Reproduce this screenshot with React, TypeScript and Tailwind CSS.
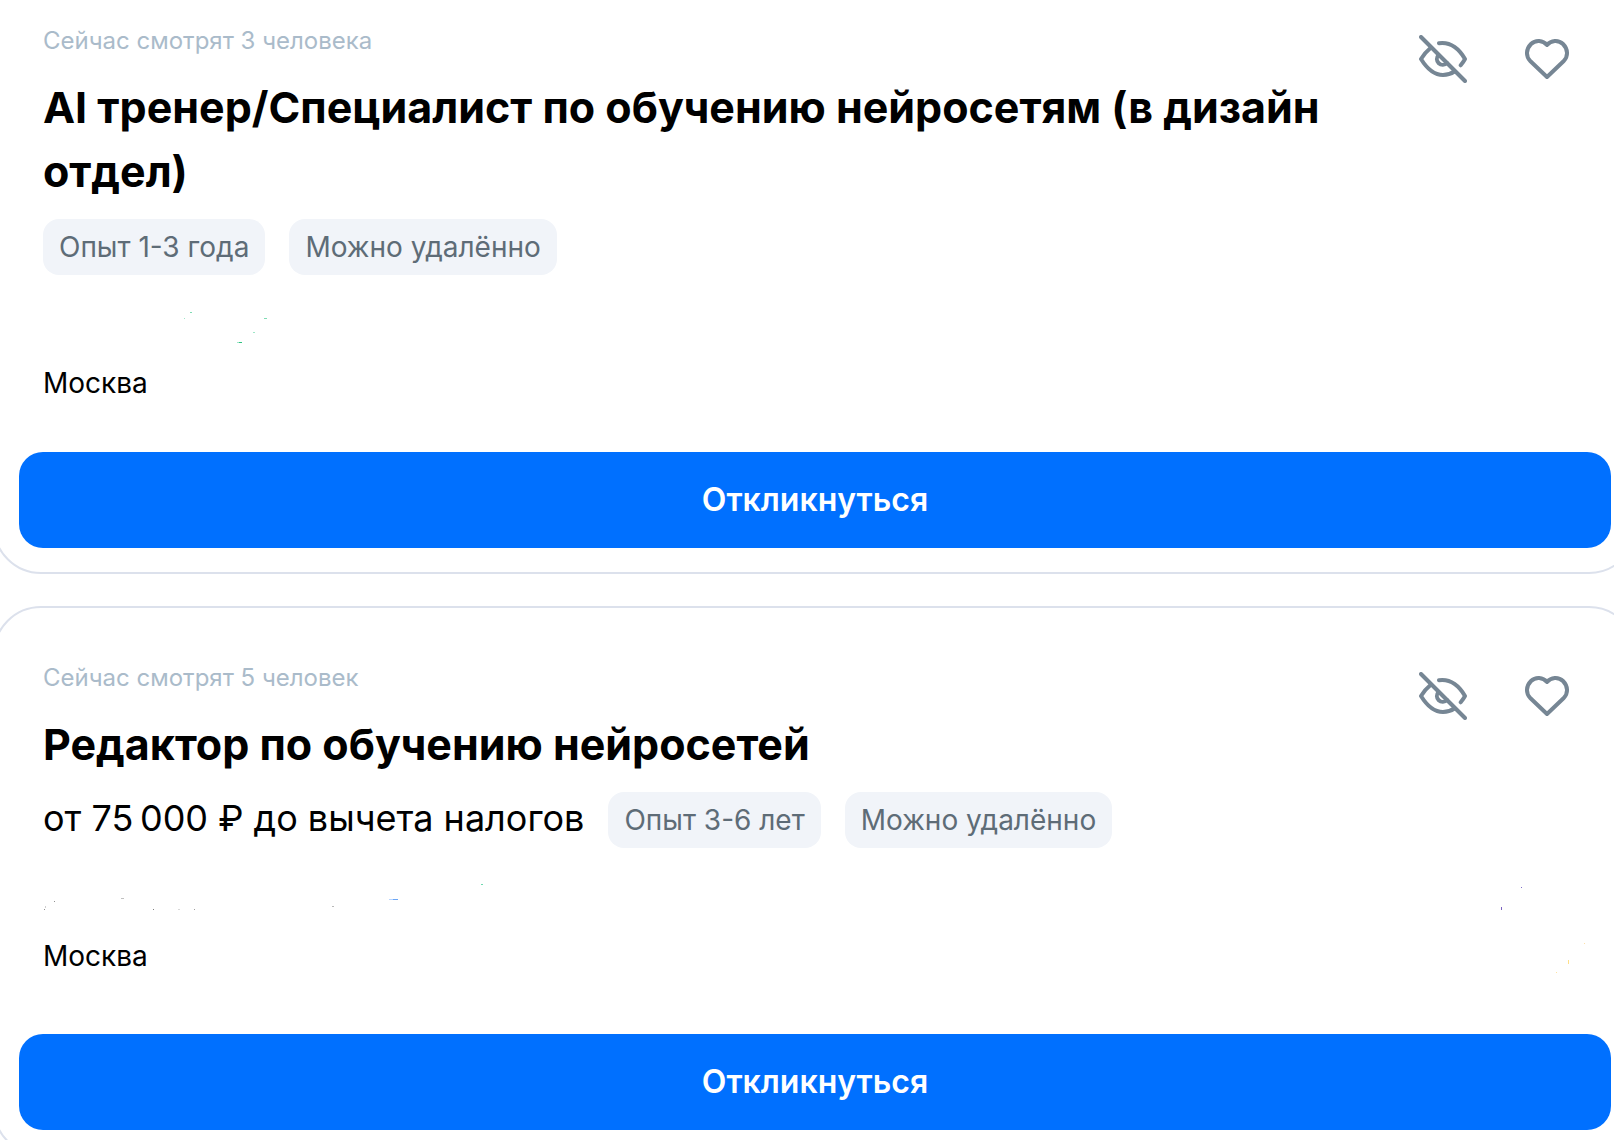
type Speck = [x: number, y: number, w: number, h: number, color: string];

type Vacancy = {
  id: string;
  watching: string;
  title: string;
  salary?: string;
  tags: string[];
  city: string;
  hasLogo?: boolean;
  specks: Speck[];
  logoSpecks?: Speck[];
};

const vacancies: Vacancy[] = [
  {
    id: "ai-trainer",
    watching: "Сейчас смотрят 3 человека",
    title: "AI тренер/Специалист по обучению нейросетям (в дизайн отдел)",
    tags: ["Опыт 1-3 года", "Можно удалённо"],
    city: "Москва",
    specks: [
      [147, 13, 2, 1, "#7fdcb4"],
      [141, 19, 1, 1, "#9fe6c8"],
      [221, 19, 3, 1, "#7fdcb4"],
      [210, 33, 2, 1, "#9fe6c8"],
      [194, 43, 2, 1, "#9fe6c8"],
      [196, 43, 3, 1, "#2fc381"],
    ],
  },
  {
    id: "editor",
    watching: "Сейчас смотрят 5 человек",
    title: "Редактор по обучению нейросетей",
    salary: "от 75\u2009000 ₽ до вычета налогов",
    tags: ["Опыт 3-6 лет", "Можно удалённо"],
    city: "Москва",
    hasLogo: true,
    specks: [
      [1, 37, 1, 1, "#909090"],
      [2, 34, 1, 2, "#d0d0d0"],
      [11, 29, 1, 1, "#909090"],
      [78, 26, 3, 1, "#c0c0c0"],
      [110, 37, 1, 1, "#808080"],
      [135, 37, 2, 1, "#d8d8d8"],
      [151, 37, 1, 1, "#a0a0a0"],
      [289, 34, 2, 1, "#b8b8b8"],
      [346, 27, 4, 1, "#b8d4ff"],
      [350, 27, 5, 1, "#6ba6f5"],
      [438, 12, 2, 1, "#6fd9b0"],
    ],
    logoSpecks: [
      [31, 15, 1, 1, "#7f6fc8"],
      [11, 35, 1, 3, "#7b62c0"],
      [94, 71, 1, 1, "#ffe0a8"],
      [78, 88, 1, 4, "#ffe08a"],
      [66, 100, 1, 1, "#ffe3a0"],
    ],
  },
];

function Specks({ items, className }: { items: Speck[]; className: string }) {
  return (
    <svg aria-hidden="true" className={className} shapeRendering="crispEdges">
      {items.map(([x, y, w, h, color]) => (
        <rect key={`${x}-${y}`} x={x} y={y} width={w} height={h} fill={color} />
      ))}
    </svg>
  );
}

function EyeOffIcon() {
  return (
    <svg
      viewBox="0 0 48 48"
      className="size-12"
      fill="none"
      stroke="currentColor"
      strokeWidth="4"
      strokeLinecap="round"
      strokeLinejoin="round"
      aria-hidden="true"
    >
      <path d="M2 2 46 46" />
      <path d="M20 8.300C30.500 6.800 39.500 13 46 24c-1.200 2.200-2.700 4.400-4.300 6.300" />
      <path d="M11.500 13C8 15.800 4.800 19.500 2 24c6.500 10.500 14 16 22 16 4 0 8-1.200 11.500-3.500" />
      <path d="M19.500 20a5.700 5.700 0 0 0 8.500 8" />
    </svg>
  );
}

function HeartIcon() {
  return (
    <svg
      viewBox="0 0 48 48"
      className="size-12"
      fill="none"
      stroke="currentColor"
      strokeWidth="4"
      strokeLinecap="round"
      strokeLinejoin="round"
      aria-hidden="true"
    >
      <path d="M24 10C20 5 12.500 4.500 8 9c-5.300 5.300-5.300 12.500-.5 17.300L24 42l16.500-15.700C45.300 21.500 45.300 14.300 40 9c-4.500-4.500-12-4-16 1Z" />
    </svg>
  );
}

function VacancyCard({ vacancy }: { vacancy: Vacancy }) {
  return (
    <article className="rounded-[48px] border-2 border-[#dce1ec] bg-white px-6 pt-12 pb-6">
      <div className="flex items-start justify-between gap-6 px-6">
        <div className="min-w-0 flex-1">
          <p className="text-2xl/11 text-[#aabbca]">{vacancy.watching}</p>
          <h2 className="mt-3 text-[43px]/16 font-bold">
            <a href={`#${vacancy.id}`}>{vacancy.title}</a>
          </h2>
        </div>
        <div className="mt-4 flex gap-14 pr-4 pl-12 text-[#768694]">
          <button type="button" aria-label="Скрыть вакансию">
            <EyeOffIcon />
          </button>
          <button type="button" aria-label="Добавить в избранное">
            <HeartIcon />
          </button>
        </div>
      </div>

      <div className="mt-4 flex flex-wrap items-start gap-6 px-6">
        {vacancy.salary && <span className="text-[36px]/13">{vacancy.salary}</span>}
        {vacancy.tags.map((tag) => (
          <span key={tag} className="rounded-2xl bg-[#f1f4f9] px-4 text-[28px]/14 text-[#5e6c77]">
            {tag}
          </span>
        ))}
      </div>

      <div className={`relative mx-6 mt-6 ${vacancy.hasLogo ? "min-h-[114px]" : "min-h-[105px]"}`}>
        <Specks items={vacancy.specks} className="absolute top-0 left-0 h-12 w-[460px]" />
        {vacancy.logoSpecks && (
          <Specks items={vacancy.logoSpecks} className="absolute top-0 right-0 h-28 w-[97px]" />
        )}
        <p className="pt-16 text-[28px]/10">{vacancy.city}</p>
      </div>

      <button
        type="button"
        className="mt-12 h-24 w-full rounded-3xl bg-[#0070ff] text-[32px]/10 font-semibold text-white"
      >
        Откликнуться
      </button>
    </article>
  );
}

export default function App() {
  return (
    <main className="h-screen overflow-hidden bg-white font-['Inter',sans-serif] text-black [font-optical-sizing:none]">
      <div className="-mt-[31px] -mr-[23px] -ml-[7px] flex flex-col gap-8">
        {vacancies.map((vacancy) => (
          <VacancyCard key={vacancy.id} vacancy={vacancy} />
        ))}
      </div>
    </main>
  );
}
